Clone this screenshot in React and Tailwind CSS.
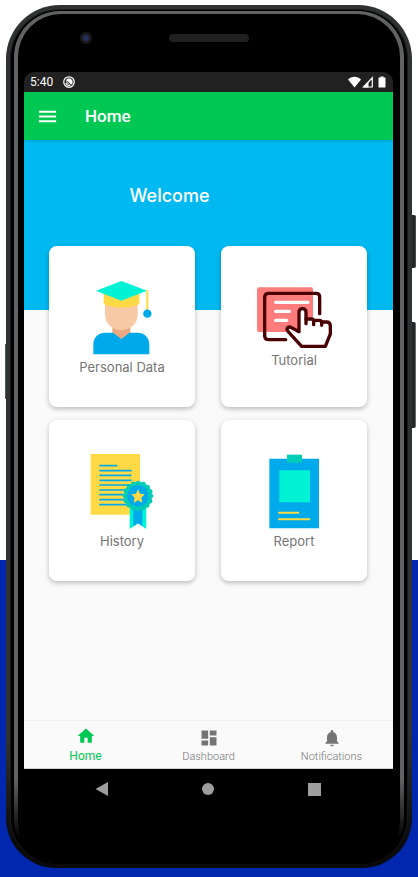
import { MdHome, MdDashboard, MdNotifications, MdMenu, MdBatteryFull } from "react-icons/md";

function PersonalDataIcon() {
  return (
    <svg className="h-[75px] w-[75px]" viewBox="134 121 225 225" aria-hidden="true">
      <path d="M216 250h54v34l-27 20-27-20z" fill="#e8a882" />
      <path d="M194 185h98v38c0 30-22 48-49 48s-49-18-49-48z" fill="#f7c9a5" />
      <path d="M190 150h107v42c-20 15-87 15-107 0z" fill="#ffda44" />
      <path d="M318 152h6v66h-6z" fill="#ffda44" />
      <circle cx="321" cy="222" r="12.500" fill="#00a9ea" />
      <path d="M243 124l77 29-77 30-76-30z" fill="#00f2d5" />
      <path d="M159 344v-29c0-22 15-36 36-36h23l25 19 25-19h23c21 0 36 14 36 36v29z" fill="#00a9ea" />
    </svg>
  );
}

function TutorialIcon() {
  return (
    <svg className="h-[61px] w-[75px]" viewBox="135 144 225 183" aria-hidden="true">
      <rect x="135" y="145" width="168" height="134" rx="6" fill="#ff7c7c" />
      <path d="M191 190h97M191 217h41M191 244h33" stroke="#fff" strokeWidth="10" strokeLinecap="round" />
      <path
        d="M261 278v-59a10.500 10.500 0 0 1 21 0v21h16q7 0 8 4h15q7 0 8 5h14q12 0 12 12v24l-14 37h-72l-42-46c-9-11 3-17 12-9z"
        fill="#fff"
      />
      <g fill="none" stroke="#4a0003" strokeWidth="10" strokeLinecap="round" strokeLinejoin="round">
        <path d="M323 224v-50q0-11-11-11H170q-12 0-12 12v115q0 12 12 12h51" />
        <path d="M282 254v-35a10.500 10.500 0 0 0-21 0v59l-22-12c-10-5-18 2-11 11l41 45h71l15-37v-24q0-12-12-12h-14" />
        <path d="M282 240h16q7 0 7 7v10M305 244h16q8 0 8 7v8" />
      </g>
    </svg>
  );
}

function HistoryIcon() {
  return (
    <svg className="h-[75px] w-[75px]" viewBox="134 118 225 225" aria-hidden="true">
      <path d="M151 117h148v183H151z" fill="#ffda44" />
      <path
        d="M179 153h50M179 168h93M179 182h93M179 197h93M179 211h93M179 226h80M179 240h80M179 255h80M179 270h80"
        stroke="#00a9ea"
        strokeWidth="5"
        strokeLinecap="round"
      />
      <path d="M268 275h50v68l-25-17-25 17z" fill="#00f2d5" />
      <path d="M279 275h27v60l-13-9-14 9z" fill="#00a9ea" />
      <circle cx="293" cy="244" r="42" fill="#00cdb4" />
      <circle
        cx="293"
        cy="244"
        r="39"
        fill="none"
        stroke="#00cdb4"
        strokeWidth="14"
        strokeLinecap="round"
        strokeDasharray="0.1 15.216"
      />
      <circle cx="293" cy="244" r="32" fill="#00a9ea" />
      <path d="M293 224l6 13 14 2-10 10 3 15-13-7-13 7 3-15-10-10 14-2z" fill="#ffda44" />
    </svg>
  );
}

function ReportIcon() {
  return (
    <svg className="h-[75px] w-[75px]" viewBox="135 119 225 225" aria-hidden="true">
      <path d="M172 133h149v209H172z" fill="#00a9ea" />
      <path d="M225 121h45v24h-45z" fill="#00cdb4" />
      <path d="M202 168h92v96h-92z" fill="#00f2d5" />
      <path d="M201 295h58M201 315h91" stroke="#ffda44" strokeWidth="6" strokeLinecap="round" />
    </svg>
  );
}

const cards = [
  { label: "Personal Data", Icon: PersonalDataIcon },
  { label: "Tutorial", Icon: TutorialIcon },
  { label: "History", Icon: HistoryIcon },
  { label: "Report", Icon: ReportIcon },
];

function StatusBar() {
  return (
    <div className="flex h-5 items-center justify-between rounded-t-[10px] bg-[#212121] px-1.5 text-white">
      <div className="flex items-center gap-2.5">
        <span className="text-xs">5:40</span>
        <svg className="size-3" viewBox="0 0 24 24" fill="none" stroke="currentColor" aria-hidden="true">
          <circle cx="12" cy="12" r="10.500" strokeWidth="2.500" />
          <path d="M6 14a6.500 6.500 0 0 0 9 4.500" strokeWidth="2.500" />
          <path d="M6 9l3-4h6l4 4v7l-3 1-6-6z" fill="currentColor" stroke="none" />
          <path d="M6 11l7 6" strokeWidth="2" />
        </svg>
      </div>
      <div className="flex items-center">
        <svg className="mr-px h-3 w-[13px]" viewBox="0 0 13 12" fill="currentColor" aria-hidden="true">
          <path d="M0 3.500C4-.2 9-.2 13 3.500L6.500 11.500z" />
        </svg>
        <svg className="mr-[5px] h-3 w-[11px]" viewBox="0 0 11 12" aria-hidden="true">
          <path d="M1.500 11L10.300 1.800V11z" fill="none" stroke="currentColor" strokeWidth="1.200" />
          <path d="M1 11.500L6.500 5.500v6z" fill="currentColor" />
        </svg>
        <svg className="mr-px h-3 w-2" viewBox="0 0 8 12" fill="currentColor" aria-hidden="true">
          <path d="M2.500 .5h3v1H7q.5 0 .5.500v9q0 .5-.5.500H1q-.5 0-.5-.500V2q0-.5.5-.500h1.500z" />
        </svg>
      </div>
    </div>
  );
}

function TabBar() {
  return (
    <nav className="grid h-[49px] grid-cols-3 border-t border-b border-t-[#f0f0f0] border-b-[#cfcfcf] bg-[#fafafa] text-[#757575]">
      <button type="button" aria-current="page" className="flex flex-col items-center pt-[5px] text-[#00c853]">
        <MdHome className="size-5" aria-hidden="true" />
        <span className="text-xs leading-5">Home</span>
      </button>
      <button type="button" className="flex flex-col items-center pt-[7px]">
        <MdDashboard className="size-5" aria-hidden="true" />
        <span className="text-[11px] leading-[18px] font-light">Dashboard</span>
      </button>
      <button type="button" className="flex flex-col items-center pt-[7px]">
        <MdNotifications className="size-5" aria-hidden="true" />
        <span className="text-[11px] leading-[18px] font-light">Notifications</span>
      </button>
    </nav>
  );
}

function SystemNav() {
  return (
    <div className="grid h-10 grid-cols-3 items-center justify-items-center bg-black px-[25px] text-[#9e9e9e]">
      <button type="button" aria-label="Back">
        <svg className="size-3.5" viewBox="0 0 14 14" fill="currentColor" aria-hidden="true">
          <path d="M.5 7L13 0v14z" />
        </svg>
      </button>
      <button type="button" aria-label="Home screen" className="size-3 rounded-full bg-[#9e9e9e]" />
      <button type="button" aria-label="Recent apps" className="size-[13px] bg-[#9e9e9e]" />
    </div>
  );
}

function Screen() {
  return (
    <div className="flex flex-col">
      <StatusBar />
      <header className="relative flex h-12 items-center gap-[26px] bg-[#00c853] px-3 text-white shadow-[0_1px_2px_rgba(0,0,0,0.15)]">
        <button type="button" aria-label="Open menu">
          <MdMenu className="size-[23px]" aria-hidden="true" />
        </button>
        <h1 className="pt-0.5 text-[17px] font-medium">Home</h1>
      </header>
      <main className="h-[580px] bg-[#fafafa]">
        <div className="h-[170px] bg-[#00b9f1] pt-11 pr-[78px] text-center font-['Inter',sans-serif] text-lg leading-6 font-medium text-white">
          Welcome
        </div>
        <div className="-mt-16 grid grid-cols-2 gap-x-[26px] gap-y-[13px] pr-[26px] pl-[25px]">
          {cards.map(({ label, Icon }) => (
            <button
              key={label}
              type="button"
              className="flex h-[161px] flex-col items-center justify-center gap-1 rounded-lg bg-white pt-0.5 shadow-[0_2px_5px_rgba(0,0,0,0.25)]"
            >
              <Icon />
              <span className="font-['Inter',sans-serif] text-[13px] leading-4 text-[#757575]">{label}</span>
            </button>
          ))}
        </div>
      </main>
      <TabBar />
      <SystemNav />
    </div>
  );
}

export default function App() {
  return (
    <div className="min-h-screen bg-[linear-gradient(#ffffff_560px,#0027ae_560px)] px-1.5 pt-[5px] pb-[9px] font-['Roboto',sans-serif]">
      <div className="relative">
        <div className="absolute top-[339px] -left-px h-[55px] w-1 bg-[#55585a]" />
        <div className="absolute top-[210px] -right-1 h-[53px] w-2 rounded-r-xs border-r border-[#484848] bg-[#252727]" />
        <div className="absolute top-[317px] -right-1 h-[106px] w-2 rounded-r-xs border-r border-[#686a6b] bg-[#252727]" />
        <div className="relative rounded-t-[54px] rounded-b-[50px] bg-[linear-gradient(#2f3233_85%,#0a0a0a_97%)] p-1">
          <div className="rounded-t-[50px] rounded-b-[46px] border-x border-t border-[#1a1c1c] bg-black px-[3px] pt-px">
            <div className="rounded-t-[46px] rounded-b-[44px] bg-[linear-gradient(#606264_90%,#000000_97%)] px-1 pt-[3px]">
              <div className="rounded-t-[43px] rounded-b-[42px] bg-black pr-[7px] pb-[55px] pl-1.5">
                <div className="grid h-[58px] grid-cols-3 items-center justify-items-center pb-2.5">
                  <div className="flex size-3 items-center justify-center rounded-full bg-[#1a1a1d]">
                    <div className="size-1.5 rounded-full bg-[#252f5c]" />
                  </div>
                  <div className="h-2 w-20 rounded-full bg-[#202020]" />
                </div>
                <Screen />
              </div>
            </div>
          </div>
        </div>
      </div>
    </div>
  );
}
